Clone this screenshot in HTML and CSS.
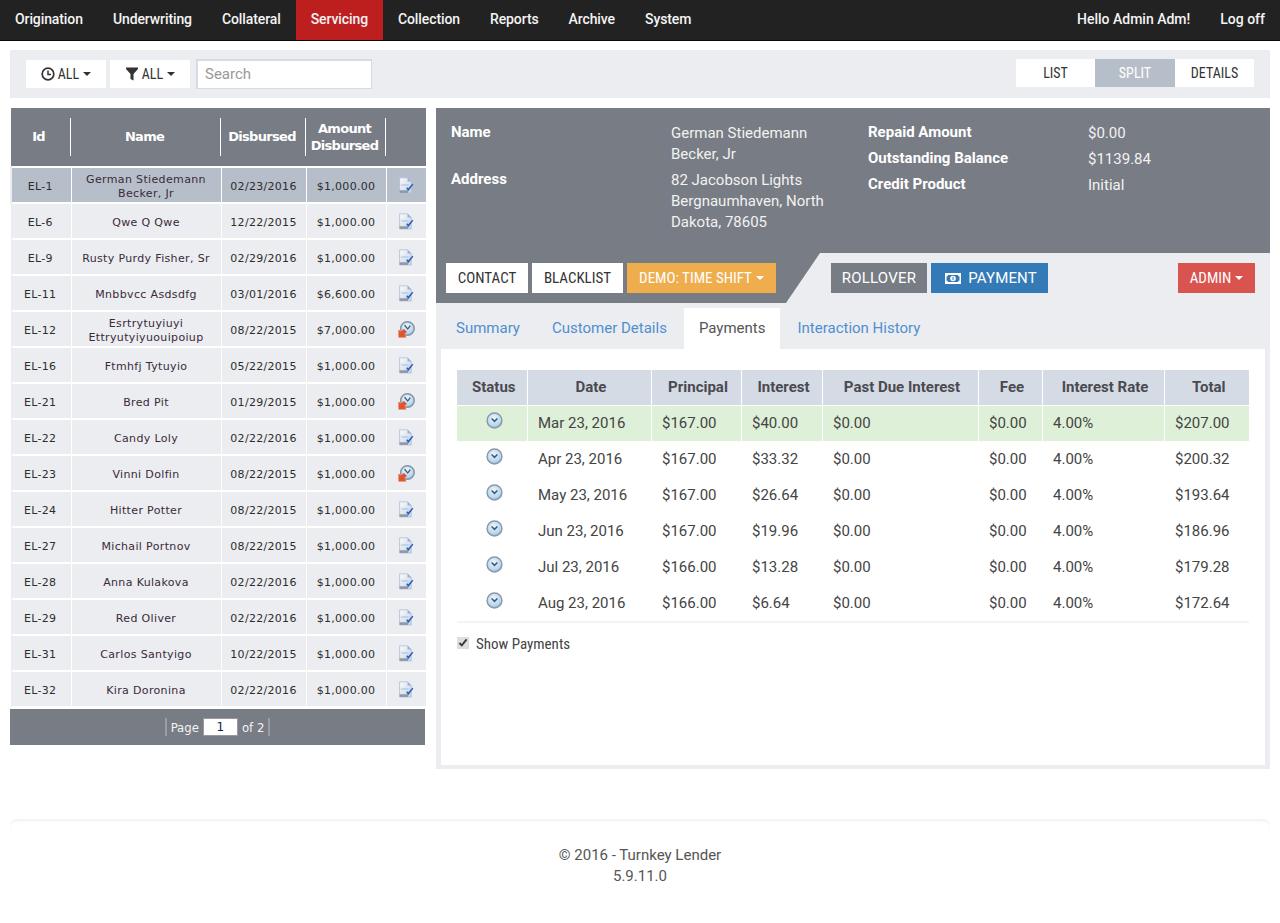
FILE: index.html
```html
<!DOCTYPE html>
<html lang="en">
<head>
<meta charset="utf-8">
<title>Turnkey Lender</title>
<link rel="stylesheet" href="styles.css">
</head>
<body>
<svg class="defs" width="0" height="0" aria-hidden="true">
  <defs>
    <linearGradient id="pg" x1="0" y1="0" x2="1" y2="1"><stop offset="0" stop-color="#fbfcff"/><stop offset="1" stop-color="#c3d1e6"/></linearGradient>
    <radialGradient id="cg" cx=".45" cy=".35" r=".65"><stop offset="0" stop-color="#eaf6fe"/><stop offset=".75" stop-color="#b7d8f0"/><stop offset="1" stop-color="#93aec8"/></radialGradient>
    <symbol id="doc" viewBox="0 0 16 16">
      <path d="M1.500 .8h7.500l3.500 3.500V15H1.500z" fill="url(#pg)" stroke="#b3bfd2" stroke-width=".8"/>
      <path d="M9 .8v3.500h3.500z" fill="#9ab0d2"/>
      <path d="M3 7.500h7" stroke="#aebfd8" stroke-width="1"/>
      <path d="M1.500 12.500h8V15h-8z" fill="#8f98a8"/>
      <path d="M7.800 10.500l1.800 2.800 4.900-6.300-1.100-.6-3.700 4.300-1-1.100z" fill="#2a63b8"/>
    </symbol>
    <symbol id="late" viewBox="0 0 18 18">
      <circle cx="10" cy="8" r="7.200" fill="url(#cg)" stroke="#87939f" stroke-width="1.500"/>
      <path d="M7 4.500l3.300 4 2.700-3.700" fill="none" stroke="#4a5a70" stroke-width="1.400"/>
      <path d="M.5 17.500V9l2.500 2 3.200-2.500 3.300 3-3 2.500 2.500 3.500z" fill="#e8522a"/>
    </symbol>
    <symbol id="clock" viewBox="0 0 16 16">
      <circle cx="8" cy="8" r="7" fill="url(#cg)" stroke="#8a97a6" stroke-width="1.300"/>
      <path d="M5.300 6.200L8 8.800l2.700-2.600" fill="none" stroke="#46566b" stroke-width="1.400"/>
    </symbol>
  </defs>
</svg>

<nav class="topnav">
  <ul class="menu m-main">
    <li><a href="#">Origination</a></li>
    <li><a href="#">Underwriting</a></li>
    <li><a href="#">Collateral</a></li>
    <li class="active"><a href="#">Servicing</a></li>
    <li><a href="#">Collection</a></li>
    <li><a href="#">Reports</a></li>
    <li><a href="#">Archive</a></li>
    <li><a href="#">System</a></li>
  </ul>
  <ul class="menu">
    <li><a href="#">Hello Admin Adm!</a></li>
    <li><a href="#">Log off</a></li>
  </ul>
</nav>

<section class="toolbar">
  <div class="filters">
    <button class="filter f-time">
      <svg class="ficon" viewBox="0 0 14 14"><circle cx="7" cy="7" r="5.800" fill="none" stroke="#333" stroke-width="1.700"/><path d="M7 3.500V7.500H10" fill="none" stroke="#333" stroke-width="1.500"/></svg>
      <span class="cond">ALL</span><i class="caret"></i>
    </button>
    <button class="filter f-state">
      <svg class="ficon" viewBox="0 0 14 14"><path d="M1 .5h12v1.500L8.500 7v6.500l-3-1.500V7L1 2z" fill="#333"/></svg>
      <span class="cond">ALL</span><i class="caret"></i>
    </button>
    <input class="search" type="text" placeholder="Search">
  </div>
  <div class="views">
    <a class="view v-list" href="#"><span class="cond">LIST</span></a>
    <a class="view v-split on" href="#"><span class="cond">SPLIT</span></a>
    <a class="view v-details" href="#"><span class="cond">DETAILS</span></a>
  </div>
</section>

<main class="columns">
  <aside class="list">
    <table class="ltable">
      <colgroup><col class="c1"><col class="c2"><col class="c3"><col class="c4"><col class="c5"></colgroup>
      <thead>
        <tr><th class="h-id"><div>Id</div></th><th><div>Name</div></th><th><div>Disbursed</div></th><th><div>Amount<br>Disbursed</div></th><th><div></div></th></tr>
      </thead>
      <tbody>
        <tr class="sel"><td>EL-1</td><td class="nm">German Stiedemann<br>Becker, Jr</td><td>02/23/2016</td><td>$1,000.00</td><td><svg class="ic"><use href="#doc"/></svg></td></tr>
        <tr><td>EL-6</td><td class="nm">Qwe Q Qwe</td><td>12/22/2015</td><td>$1,000.00</td><td><svg class="ic"><use href="#doc"/></svg></td></tr>
        <tr><td>EL-9</td><td class="nm">Rusty Purdy Fisher, Sr</td><td>02/29/2016</td><td>$1,000.00</td><td><svg class="ic"><use href="#doc"/></svg></td></tr>
        <tr><td>EL-11</td><td class="nm">Mnbbvcc Asdsdfg</td><td>03/01/2016</td><td>$6,600.00</td><td><svg class="ic"><use href="#doc"/></svg></td></tr>
        <tr><td>EL-12</td><td class="nm">Esrtrytuyiuyi<br>Ettryutyiyuouipoiup</td><td>08/22/2015</td><td>$7,000.00</td><td><svg class="ic"><use href="#late"/></svg></td></tr>
        <tr><td>EL-16</td><td class="nm">Ftmhfj Tytuyio</td><td>05/22/2015</td><td>$1,000.00</td><td><svg class="ic"><use href="#doc"/></svg></td></tr>
        <tr><td>EL-21</td><td class="nm">Bred Pit</td><td>01/29/2015</td><td>$1,000.00</td><td><svg class="ic"><use href="#late"/></svg></td></tr>
        <tr><td>EL-22</td><td class="nm">Candy Loly</td><td>02/22/2016</td><td>$1,000.00</td><td><svg class="ic"><use href="#doc"/></svg></td></tr>
        <tr><td>EL-23</td><td class="nm">Vinni Dolfin</td><td>08/22/2015</td><td>$1,000.00</td><td><svg class="ic"><use href="#late"/></svg></td></tr>
        <tr><td>EL-24</td><td class="nm">Hitter Potter</td><td>08/22/2015</td><td>$1,000.00</td><td><svg class="ic"><use href="#doc"/></svg></td></tr>
        <tr><td>EL-27</td><td class="nm">Michail Portnov</td><td>08/22/2015</td><td>$1,000.00</td><td><svg class="ic"><use href="#doc"/></svg></td></tr>
        <tr><td>EL-28</td><td class="nm">Anna Kulakova</td><td>02/22/2016</td><td>$1,000.00</td><td><svg class="ic"><use href="#doc"/></svg></td></tr>
        <tr><td>EL-29</td><td class="nm">Red Oliver</td><td>02/22/2016</td><td>$1,000.00</td><td><svg class="ic"><use href="#doc"/></svg></td></tr>
        <tr><td>EL-31</td><td class="nm">Carlos Santyigo</td><td>10/22/2015</td><td>$1,000.00</td><td><svg class="ic"><use href="#doc"/></svg></td></tr>
        <tr><td>EL-32</td><td class="nm">Kira Doronina</td><td>02/22/2016</td><td>$1,000.00</td><td><svg class="ic"><use href="#doc"/></svg></td></tr>
      </tbody>
    </table>
    <div class="pager">
      <span class="pgsep"></span>
      <span>Page</span>
      <input class="pginput" type="text" value="1">
      <span>of 2</span>
      <span class="pgsep"></span>
    </div>
  </aside>

  <section class="detail">
    <header class="info">
      <dl class="pairs p-left">
        <dt>Name</dt><dd>German Stiedemann<br>Becker, Jr</dd>
        <dt>Address</dt><dd>82 Jacobson Lights<br>Bergnaumhaven, North<br>Dakota, 78605</dd>
      </dl>
      <dl class="pairs p-right">
        <dt>Repaid Amount</dt><dd>$0.00</dd>
        <dt>Outstanding Balance</dt><dd>$1139.84</dd>
        <dt>Credit Product</dt><dd>Initial</dd>
      </dl>
    </header>

    <div class="actions">
      <div class="actions-bg"></div>
      <div class="act-group g-left">
        <a class="btn b-contact" href="#"><span class="cond">CONTACT</span></a>
        <a class="btn b-blacklist" href="#"><span class="cond">BLACKLIST</span></a>
        <a class="btn b-demo" href="#"><span class="cond">DEMO: TIME SHIFT</span><i class="caret"></i></a>
      </div>
      <div class="act-group g-mid">
        <a class="btn b-roll" href="#">ROLLOVER</a>
        <a class="btn b-pay" href="#">
          <svg class="money" viewBox="0 0 16 11"><path fill-rule="evenodd" d="M0 0h16v11H0zM3 2a1.500 1.500 0 0 1-1.500 1.500v4A1.500 1.500 0 0 1 3 9h10a1.500 1.500 0 0 1 1.500-1.500v-4A1.500 1.500 0 0 1 13 2z" fill="#fff"/><circle cx="8" cy="5.500" r="2.800" fill="#fff"/><path d="M8 3.800v3.400" stroke="#337ab7" stroke-width="1"/></svg>
          PAYMENT
        </a>
      </div>
      <a class="btn b-admin" href="#"><span class="cond">ADMIN</span><i class="caret"></i></a>
    </div>

    <ul class="tabs">
      <li class="t1"><a href="#">Summary</a></li>
      <li class="t2"><a href="#">Customer Details</a></li>
      <li class="t3 active"><a href="#">Payments</a></li>
      <li class="t4"><a href="#">Interaction History</a></li>
    </ul>

    <div class="pane">
      <table class="ptable">
        <colgroup><col class="k1"><col class="k2"><col class="k3"><col class="k4"><col class="k5"><col class="k6"><col class="k7"><col class="k8"></colgroup>
        <thead>
          <tr><th>Status</th><th>Date</th><th>Principal</th><th>Interest</th><th>Past Due Interest</th><th>Fee</th><th>Interest Rate</th><th>Total</th></tr>
        </thead>
        <tbody>
          <tr class="cur"><td class="st"><svg class="cl"><use href="#clock"/></svg></td><td>Mar 23, 2016</td><td>$167.00</td><td>$40.00</td><td>$0.00</td><td>$0.00</td><td>4.00%</td><td>$207.00</td></tr>
          <tr><td class="st"><svg class="cl"><use href="#clock"/></svg></td><td>Apr 23, 2016</td><td>$167.00</td><td>$33.32</td><td>$0.00</td><td>$0.00</td><td>4.00%</td><td>$200.32</td></tr>
          <tr><td class="st"><svg class="cl"><use href="#clock"/></svg></td><td>May 23, 2016</td><td>$167.00</td><td>$26.64</td><td>$0.00</td><td>$0.00</td><td>4.00%</td><td>$193.64</td></tr>
          <tr><td class="st"><svg class="cl"><use href="#clock"/></svg></td><td>Jun 23, 2016</td><td>$167.00</td><td>$19.96</td><td>$0.00</td><td>$0.00</td><td>4.00%</td><td>$186.96</td></tr>
          <tr><td class="st"><svg class="cl"><use href="#clock"/></svg></td><td>Jul 23, 2016</td><td>$166.00</td><td>$13.28</td><td>$0.00</td><td>$0.00</td><td>4.00%</td><td>$179.28</td></tr>
          <tr class="last"><td class="st"><svg class="cl"><use href="#clock"/></svg></td><td>Aug 23, 2016</td><td>$166.00</td><td>$6.64</td><td>$0.00</td><td>$0.00</td><td>4.00%</td><td>$172.64</td></tr>
        </tbody>
      </table>
      <label class="show"><input class="chk" type="checkbox" checked><span class="cond">Show Payments</span></label>
    </div>
  </section>
</main>

<footer class="foot">
  <p>© 2016 - Turnkey Lender</p>
  <p>5.9.11.0</p>
</footer>
</body>
</html>
```

FILE: styles.css
```css
* { box-sizing: border-box; }
html, body { margin: 0; padding: 0; }
body { width: 1280px; height: 923px; overflow: hidden; background: #fff; font-family: Roboto, "Liberation Sans", sans-serif; font-size: 14px; color: #555; }
a { text-decoration: none; color: inherit; }
ul { list-style: none; margin: 0; padding: 0; }
.defs { position: absolute; }

.cond { display: inline-block; font-stretch: condensed; white-space: nowrap; }

.topnav { height: 41px; background: #222; border-bottom: 1px solid #080808; display: flex; justify-content: space-between; color: #fff; }
.menu { display: flex; }
.menu li a { display: block; height: 40px; line-height: 39px; padding: 0 15px; font-size: 14px; font-weight: 500; color: #f4f4f4; }
.m-main li a { letter-spacing: -.1px; }
.menu li.active a { background: #bd1f1f; }

.toolbar { margin: 9px 10px 0; height: 48px; background: #ebedf0; display: flex; justify-content: space-between; padding: 9px 16px; }
.filters { display: flex; align-items: flex-start; }
.filter { border: 0; background: #fff; height: 28px; margin-top: 1px; padding: 0; display: flex; align-items: center; justify-content: center; font: 14px Roboto, sans-serif; color: #333; }
.f-time { width: 80px; margin-right: 4px; }
.f-state { width: 80px; margin-right: 6px; }
.ficon { width: 14px; height: 14px; margin-right: 3px; }
.caret { display: inline-block; width: 0; height: 0; margin-left: 4px; border-top: 4px solid currentColor; border-left: 4px solid transparent; border-right: 4px solid transparent; }
.search { width: 176px; height: 30px; border: 1px solid #d5dbe5; border-width: 2px 1px 1px 2px; padding: 0 7px 2px; font: 15px Roboto, sans-serif; color: #333; outline: 0; background: #fff; }
.search::placeholder { color: #999; opacity: 1; }
.views { display: flex; height: 28px; }
.view { display: block; background: #fff; text-align: center; line-height: 28px; color: #333; font-size: 14px; }
.v-list { width: 79px; }
.v-split { width: 80px; }
.v-details { width: 79px; }
.view.on { background: #b6bfc9; color: #fff; }

.columns { display: flex; align-items: flex-start; margin: 10px 10px 0; gap: 11px; }

.list { width: 415px; flex: none; }
.ltable { width: 415px; table-layout: fixed; border-collapse: collapse; font-family: "DejaVu Sans", Verdana, sans-serif; font-size: 11px; color: #2d2d2d; }
.c1 { width: 60px; }
.c2 { width: 150px; }
.c3 { width: 85px; }
.c4 { width: 80px; }
.c5 { width: 40px; }
.ltable thead tr { background: #787c84; height: 59px; border-bottom: 2px solid #fff; }
.ltable th { padding: 0; color: #fff; font-weight: 700; font-size: 13px; line-height: 17px; }
.ltable th div { height: 38px; padding: 0 2px 1px 0; display: flex; align-items: center; justify-content: center; border-right: 1px solid #fff; text-align: center; letter-spacing: -.7px; }
.ltable th:last-child div { border-right: 0; }
.ltable .h-id div { padding-right: 4px; }
.ltable tbody tr { height: 36px; background: #ebedf0; border-bottom: 2px solid #fff; }
.ltable td { padding: 3px 0 0; text-align: center; border-right: 1px solid #fff; line-height: 14px; vertical-align: middle; letter-spacing: .3px; }
.ltable td:last-child { border-right: 0; padding: 0; }
.ltable td:first-child { border-left: 2px solid transparent; padding-right: 2px; }
.ltable tr.sel { background: #b6bfc9; }
.ltable tr.sel td:first-child { border-left-color: #ebedf0; }
.ltable .nm { letter-spacing: .35px; color: #3a2a3a; }
.ic { width: 17px; height: 17px; display: block; margin: 0 0 0 11px; }

.pager { height: 36px; margin-top: 1px; background: #787c84; display: flex; align-items: center; justify-content: center; color: #f4f4f4; font-family: "DejaVu Sans Condensed", "DejaVu Sans", sans-serif; font-size: 13px; gap: 4px; }
.pgsep { width: 2px; height: 18px; background: #999da4; }
.pginput { width: 35px; height: 18px; border: 1px solid #999; padding: 0; text-align: center; font: 12px "DejaVu Sans", sans-serif; color: #124; background: #fff; }

.detail { width: 834px; flex: none; background: #ebedf0; height: 661px; }
.info { height: 145px; background: #787c84; color: #fff; display: flex; padding: 14px 15px 0; font-size: 15px; line-height: 21px; }
.pairs { margin: 0; display: grid; grid-template-columns: 220px 1fr; align-content: start; row-gap: 4px; }
.pairs dt { font-weight: 700; font-size: 15px; color: #fff; line-height: 21px; }
.pairs dd { margin: 1px 0 0; color: #f2f2f2; }
.p-left { width: 417px; }
.p-right { flex: 1; }

.actions { position: relative; height: 50px; display: flex; align-items: flex-start; padding: 10px 15px 0 10px; }
.actions-bg { position: absolute; left: 0; top: 0; bottom: 0; width: 384px; background: #787c84; clip-path: polygon(0 0, 100% 0, 350px 100%, 0 100%); }
.act-group { position: relative; display: flex; gap: 4px; }
.g-left { width: 385px; }
.g-mid { flex: 1; }
.btn { position: relative; display: flex; align-items: center; justify-content: center; height: 30px; font-size: 15px; }
.b-contact { width: 82px; background: #fff; color: #333; }
.b-blacklist { width: 91px; background: #fff; color: #333; }
.b-demo { width: 149px; background: #f0ad4e; color: #fff; }
.b-roll { width: 96px; background: #787c84; color: #fff; letter-spacing: .2px; }
.b-pay { width: 117px; padding-left: 3px; background: #337ab7; color: #fff; letter-spacing: .15px; }
.money { width: 16px; height: 11px; margin-right: 7px; }
.b-admin { width: 77px; background: #d9534f; color: #fff; }

.tabs { display: flex; margin: 5px 5px 0; height: 41px; font-size: 15px; }
.tabs li a { display: block; height: 41px; line-height: 41px; padding: 0 15px; color: #4f8fcf; }
.tabs li.active a { background: #fff; color: #555; }
.tabs .t2 a { padding: 0 17px 0 17px; }
.tabs .t4 a { padding: 0 15px 0 17px; }

.pane { margin: 0 5px; height: 416px; background: #fff; padding: 21px 16px 0; }
.ptable { width: 792px; table-layout: fixed; border-collapse: collapse; font-size: 15px; color: #444; }
.k1 { width: 70px; }
.k2 { width: 124px; }
.k3 { width: 90px; }
.k4 { width: 81px; }
.k5 { width: 156px; }
.k6 { width: 64px; }
.k7 { width: 122px; }
.k8 { width: 85px; }
.ptable thead tr { height: 35px; background: #d5dbe5; }
.ptable th { padding: 0 0 0 4px; text-align: center; font-weight: 700; font-size: 15px; color: #4a4a50; border-right: 1px solid #fff; border-bottom: 1px solid #fff; }
.ptable th:last-child, .ptable td:last-child { border-right: 0; }
.ptable tbody tr { height: 36px; }
.ptable td { padding: 0 10px 0 10.500px; border-right: 1px solid transparent; }
.ptable tr.cur { background: #dff0d8; }
.ptable tr.cur td { border-right-color: #fff; }
.ptable tbody tr.last { height: 37px; border-bottom: 2px solid #f3f4f6; }
.ptable tr.last td { padding-bottom: 1px; }
.ptable td.st { padding: 0 0 0 5px; text-align: center; }
.cl { display: block; width: 17px; height: 17px; margin: -5px auto 0; }

.show { display: flex; align-items: center; margin-top: 11px; height: 18px; color: #444; font-size: 15px; }
.show .cond { margin-top: 2px; }
.chk { width: 12px; height: 12px; margin: 0 7px 0 0; accent-color: #dedede; }

.foot { margin: 50px 10px 0; height: 90px; border-radius: 6px 6px 0 0; box-shadow: inset 0 3px 3px -1px #f0f1f3; text-align: center; padding-top: 26px; font-size: 15px; line-height: 21px; color: #555; }
.foot p { margin: 0; }
```
